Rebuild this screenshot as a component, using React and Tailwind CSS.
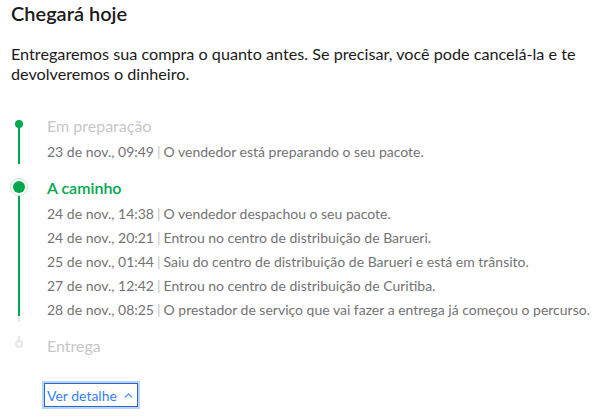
import { ChevronUp } from "lucide-react"

const events = [
  { date: "24 de nov., 14:38", text: "O vendedor despachou o seu pacote." },
  { date: "24 de nov., 20:21", text: "Entrou no centro de distribuição de Barueri." },
  { date: "25 de nov., 01:44", text: "Saiu do centro de distribuição de Barueri e está em trânsito." },
  { date: "27 de nov., 12:42", text: "Entrou no centro de distribuição de Curitiba." },
  { date: "28 de nov., 08:25", text: "O prestador de serviço que vai fazer a entrega já começou o percurso." },
]

const EventLine = ({ date, text }) => (
  <p className="h-6 leading-6 text-[14px] text-[#737373] whitespace-nowrap">
    {date}
    <span className="text-[#bfbfbf] mx-[3px]">|</span>
    {text}
  </p>
)

const App = () => {
  return (
    <div className="w-[611px] h-[417px] bg-white px-[11px] pt-[1px] font-['Lato',sans-serif] text-[rgba(0,0,0,0.9)]">
      <h1 className="text-[20px] leading-6 font-semibold text-[#1a1a1a]">Chegará hoje</h1>

      <p className="mt-[19px] text-[16.2px] leading-[20px] text-[#1a1a1a]">
        Entregaremos sua compra o quanto antes. Se precisar, você pode cancelá-la e te devolveremos o dinheiro.
      </p>

      <div className="mt-[32px]">
        {/* Em preparação */}
        <div className="flex pb-[14px]">
          <div className="relative w-4 mr-5">
            <div className="absolute left-[7px] top-2 bottom-0 w-[2px] bg-[#00a650]" />
            <div className="absolute left-1 top-1 w-2 h-2 rounded-full bg-[#00a650]" />
          </div>
          <div>
            <h3 className="h-5 leading-5 text-[16px] text-[#c7c7c7]">Em preparação</h3>
            <div className="mt-1">
              <EventLine date="23 de nov., 09:49" text="O vendedor está preparando o seu pacote." />
            </div>
          </div>
        </div>

        {/* A caminho */}
        <div className="flex pb-[14px]">
          <div className="relative w-4 mr-5">
            <div className="absolute left-[7px] top-0 h-[138px] w-[2px] bg-[#00a650]" />
            <div className="absolute left-[7px] top-[138px] bottom-0 w-[2px] bg-[#e6e6e6]" />
            <div className="absolute -left-[1px] top-0 w-[18px] h-[18px] rounded-full border-[1.5px] border-[#bfe8d2] bg-white flex items-center justify-center">
              <div className="w-3 h-3 rounded-full bg-[#00a650]" />
            </div>
          </div>
          <div>
            <h3 className="h-5 leading-5 text-[16px] font-semibold text-[#00a650]">A caminho</h3>
            <div className="mt-1">
              {events.map((e) => (
                <EventLine key={e.date} date={e.date} text={e.text} />
              ))}
            </div>
          </div>
        </div>

        {/* Entrega */}
        <div className="flex">
          <div className="relative w-4 mr-5">
            <div className="absolute left-[7px] top-0 h-1 w-[2px] bg-[#e6e6e6]" />
            <div className="absolute left-1 top-1 w-2 h-2 rounded-full border-2 border-[#e6e6e6] bg-white" />
          </div>
          <h3 className="h-5 leading-5 text-[16px] text-[#c7c7c7]">Entrega</h3>
        </div>
      </div>

      <div className="mt-[27px] pl-[33px]">
        <button className="flex items-center gap-[5px] h-[24px] px-[2px] border border-[#2968c8] ring-2 ring-[#bcd4f7] text-[14px] text-[#3483fa]">
          Ver detalhe
          <ChevronUp size={13} strokeWidth={2} />
        </button>
      </div>
    </div>
  )
}

export default App
